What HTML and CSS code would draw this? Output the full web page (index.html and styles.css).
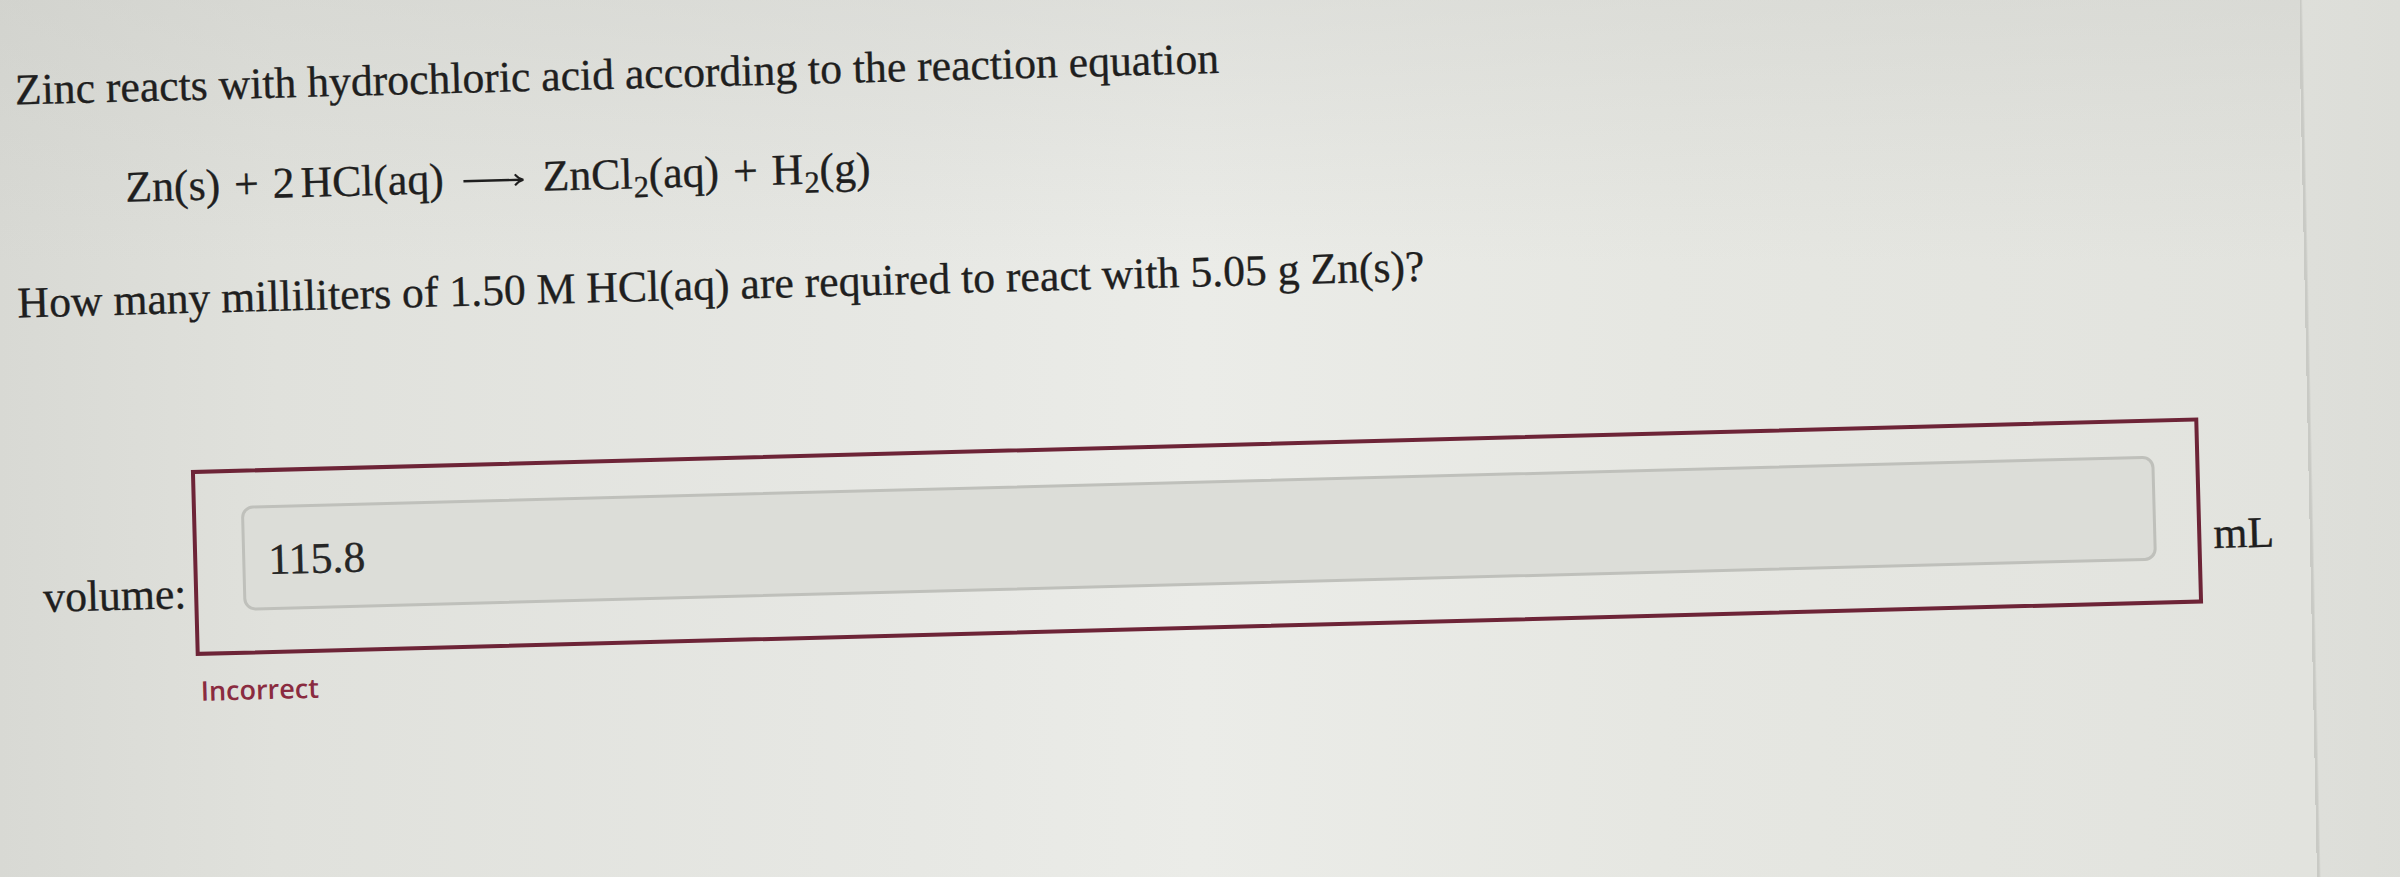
FILE: index.html
```html
<!DOCTYPE html>
<html lang="en">
<head>
<meta charset="utf-8">
<title>Zinc and hydrochloric acid</title>
<link rel="stylesheet" href="styles.css">
</head>
<body>
<div class="page">
  <main class="main">
    <div class="content">
      <p class="intro">Zinc reacts with hydrochloric acid according to the reaction equation</p>
      <div class="equation">
        <span>Zn(s)</span><span class="op">+</span><span>2</span><span class="thin"></span><span>HCl(aq)</span><svg class="arrow" width="62" height="20" viewBox="0 0 62 20" aria-hidden="true"><path d="M1 10.5 H59" stroke="#1f1f1f" stroke-width="2.4" fill="none"/><path d="M52.5 5 C54.8 8 57.2 9.6 61 10.5 C57.2 11.4 54.8 13 52.5 16" stroke="#1f1f1f" stroke-width="2" fill="none"/></svg><span>ZnCl<sub>2</sub>(aq)</span><span class="op">+</span><span>H<sub>2</sub>(g)</span>
      </div>
      <p class="question">How many milliliters of 1.50 M HCl(aq) are required to react with 5.05 g Zn(s)?</p>
      <div class="answer-row">
        <span class="label">volume:</span>
        <div class="answer-box">
          <div class="field">115.8</div>
        </div>
        <span class="unit">mL</span>
      </div>
      <div class="feedback">Incorrect</div>
    </div>
  </main>
  <div class="bezel"></div>
</div>
</body>
</html>
```

FILE: styles.css
```css
html, body {
  margin: 0;
  padding: 0;
}

body {
  width: 2400px;
  height: 877px;
  overflow: hidden;
  background: #e3e4df;
}

.page {
  display: flex;
  width: 2400px;
  height: 877px;
  overflow: hidden;
}

.main {
  flex: 1;
  min-width: 0;
  background:
    linear-gradient(to bottom, rgba(200, 201, 196, 0.35) 0%, rgba(200, 201, 196, 0) 30%),
    linear-gradient(to right, #d8d9d4 0%, #e0e1dc 12%, #e7e8e4 40%, #ebece8 52%, #e6e7e2 72%, #e2e3de 100%);
}

.content {
  padding-top: 66px;
  transform: rotate(-1.5deg);
  transform-origin: 0 400px;
  color: #1f1f1f;
  font-family: "Liberation Serif", "Times New Roman", serif;
  font-size: 43.7px;
  line-height: 49px;
  -webkit-text-stroke: 0.35px #1f1f1f;
}

.intro {
  margin: 0 0 0 23px;
}

.equation {
  display: flex;
  align-items: baseline;
  margin: 51px 0 0 131px;
  height: 49px;
  white-space: nowrap;
}

.equation sub {
  font-size: 0.7em;
  line-height: 0;
  vertical-align: -9px;
  margin-left: 1px;
}

.equation .op {
  margin: 0 14px;
}

.equation .thin {
  width: 6px;
}

.arrow {
  align-self: center;
  margin: 4px 18px 0 19px;
}

.question {
  margin: 64px 0 0 20px;
}

.answer-row {
  display: flex;
  align-items: flex-end;
  margin: 147px 0 0 38px;
}

.label {
  line-height: 43px;
  margin-bottom: 41px;
  margin-right: 8px;
}

.answer-box {
  display: flex;
  box-sizing: border-box;
  width: 2008px;
  height: 186px;
  padding: 33px 41px 40px 45px;
  border: 4px solid #6d2437;
}

.field {
  flex: 1;
  display: flex;
  align-items: center;
  box-sizing: border-box;
  padding: 4px 0 0 23px;
  border: 3px solid #bfc0bb;
  border-radius: 12px;
  background: #dcddd8;
  color: #262626;
}

.unit {
  line-height: 43px;
  margin-bottom: 48px;
  margin-left: 12px;
}

.feedback {
  margin: 16px 0 0 193px;
  font-family: "Open Sans", "Noto Sans", sans-serif;
  font-weight: 600;
  font-size: 27px;
  line-height: 37px;
  color: #8a2b40;
  -webkit-text-stroke: 0;
}

.bezel {
  flex: 0 0 100px;
  background: linear-gradient(88.8deg, #e2e3de 0 17px, #c9cac5 17px 19px, #dedfda 21px, #dcddd8 100%);
}
```
